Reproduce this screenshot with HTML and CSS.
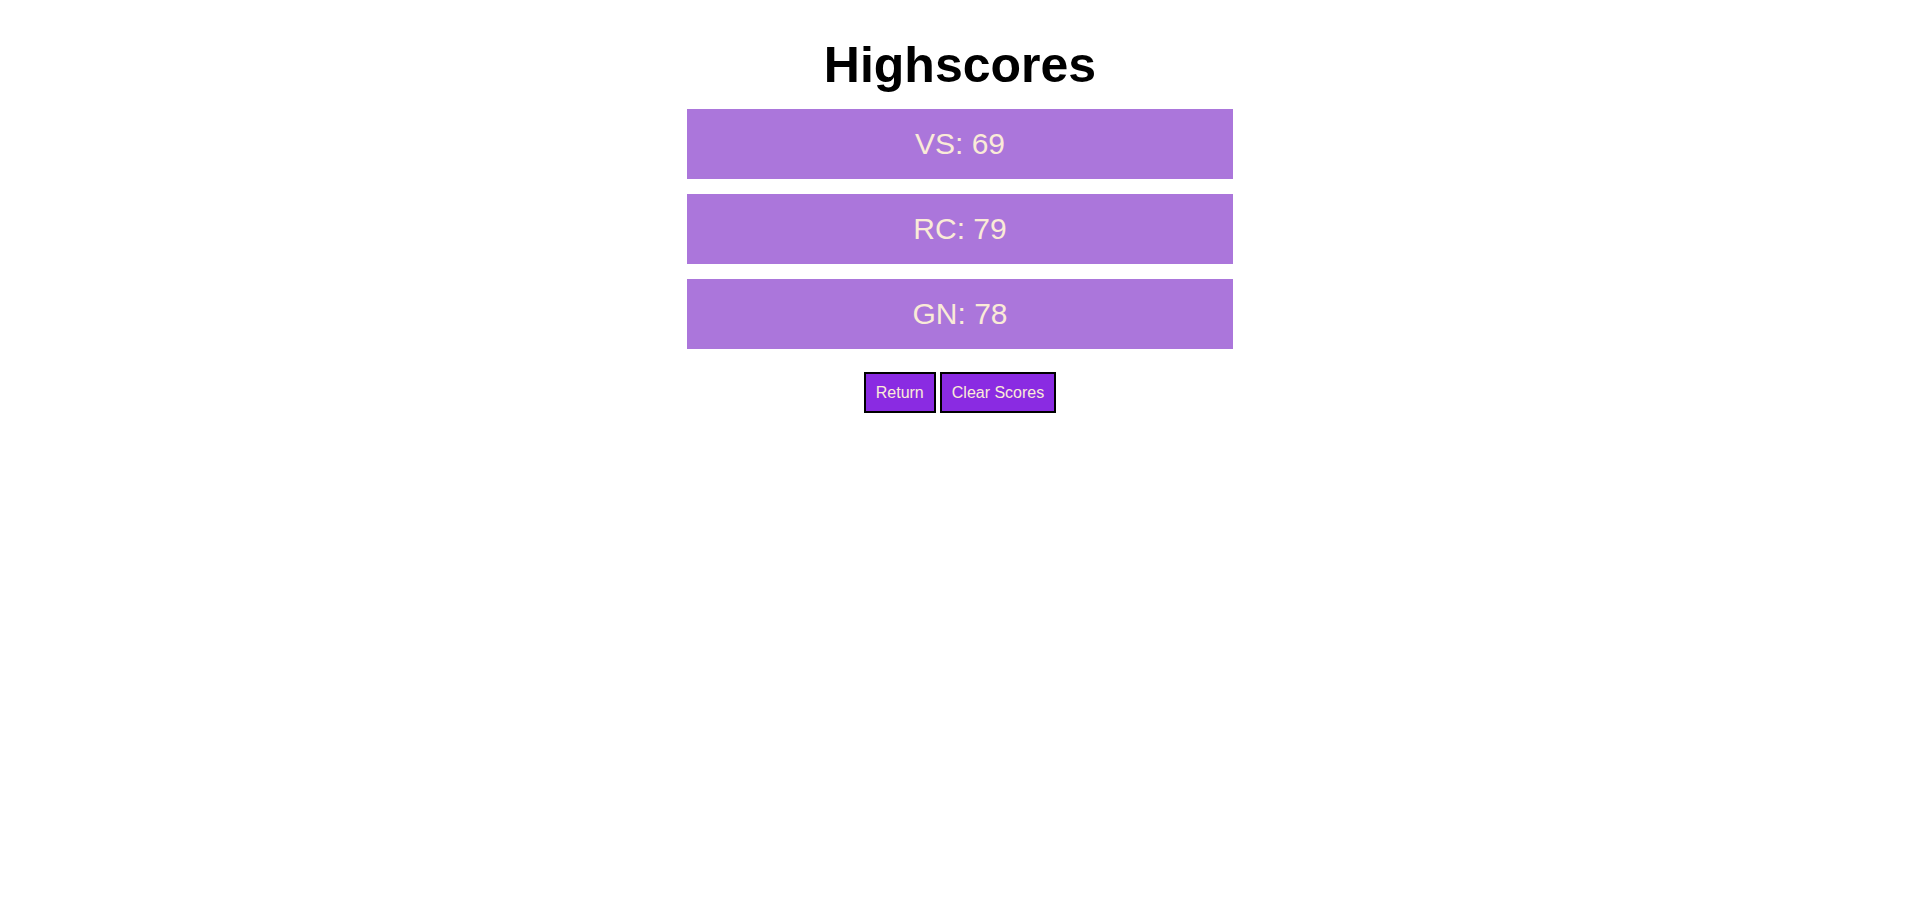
FILE: index.html
```html
<!DOCTYPE html>
<html lang="en">
<head>
<meta charset="utf-8">
<title>Highscores</title>
<link rel="stylesheet" href="styles.css">
</head>
<body>
<main class="page">
  <h1 class="title">Highscores</h1>
  <ul class="scores">
    <li class="score">VS: 69</li>
    <li class="score">RC: 79</li>
    <li class="score">GN: 78</li>
  </ul>
  <div class="actions">
    <button class="btn">Return</button>
    <button class="btn">Clear Scores</button>
  </div>
</main>
</body>
</html>
```

FILE: styles.css
```css
html, body {
  margin: 0;
  padding: 0;
  background: #ffffff;
}

body {
  font-family: "Liberation Sans", Arial, sans-serif;
}

.page {
  display: flex;
  flex-direction: column;
  align-items: center;
  padding-top: 36px;
}

.title {
  margin: 0;
  font-size: 50px;
  font-weight: bold;
  color: #000000;
  line-height: 58px;
}

.scores {
  list-style: none;
  margin: 15px 0 0;
  padding: 0;
  width: 546px;
  display: flex;
  flex-direction: column;
  gap: 15px;
}

.score {
  height: 70px;
  display: flex;
  align-items: center;
  justify-content: center;
  background: #ab76db;
  color: #faebd7;
  font-size: 30px;
}

.actions {
  margin-top: 23px;
  display: flex;
  gap: 4px;
}

.btn {
  font-family: "Liberation Sans", Arial, sans-serif;
  font-size: 16px;
  height: 41px;
  padding: 0 10px;
  background: #8a2be2;
  color: #faebd7;
  border: 2px solid #000000;
  border-radius: 0;
  cursor: pointer;
}
```
